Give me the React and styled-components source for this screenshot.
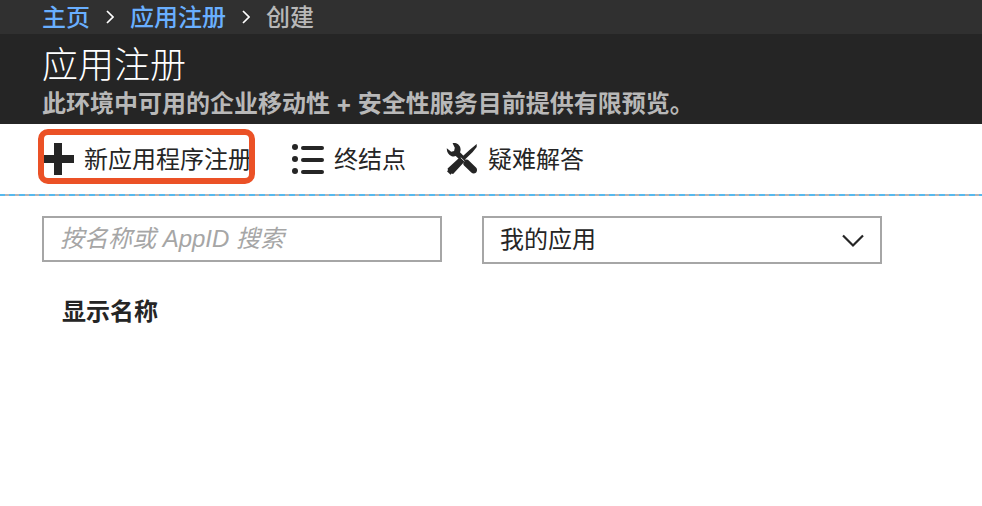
import React from "react";
import styled, { createGlobalStyle } from "styled-components";

const latinFirst = 'Inter, "Noto Sans CJK SC", sans-serif';

const GlobalStyle = createGlobalStyle`
  *, *::before, *::after { box-sizing: border-box; }
  body {
    margin: 0;
    background: #fff;
    color: #252525;
    font-family: "Noto Sans", "Noto Sans CJK SC", sans-serif;
    font-size: 24px;
    line-height: 32px;
  }
`;

const Breadcrumb = styled.nav`
  background: #303030;
  padding: 0 42px;
  height: 34px;
`;

const Crumbs = styled.ol`
  display: flex;
  align-items: center;
  gap: 16px;
  margin: 0;
  padding: 0;
  list-style: none;
  line-height: 34px;
  font-weight: 500;
  color: #b8b8b8;
`;

const Crumb = styled.li`
  display: flex;
  align-items: center;
  gap: 16px;
`;

const CrumbLink = styled.a`
  color: #69afff;
  text-decoration: none;
`;

const Header = styled.header`
  background: #252525;
  padding: 8px 42px 4px;
`;

const Title = styled.h1`
  margin: 0;
  color: #fff;
  font-size: 36px;
  line-height: 46px;
  font-weight: 300;
`;

const Subtitle = styled.p`
  margin: 0;
  color: #b8b8b8;
  font-family: ${latinFirst};
  font-weight: 700;
`;

const Toolbar = styled.div`
  display: flex;
  align-items: center;
  gap: 40px;
  height: 70px;
  padding: 0 42px;
`;

const ToolButton = styled.button`
  position: relative;
  display: flex;
  align-items: center;
  gap: 10px;
  border: 0;
  padding: 0;
  background: none;
  color: inherit;
  font: inherit;
  white-space: nowrap;

  svg { flex: none; }
`;

const Highlight = styled.span`
  position: absolute;
  inset: -14px -3px -9px -4px;
  border: 6px solid #eb5126;
  border-radius: 10px;
  pointer-events: none;
`;

const Divider = styled.hr`
  height: 2px;
  margin: 0;
  border: 0;
  background: repeating-linear-gradient(90deg, #55b9ee 0 5px, #b8b3b3 5px 9px, #55b9ee 9px 10px);
`;

const Filters = styled.form`
  display: flex;
  align-items: flex-start;
  gap: 40px;
  padding: 20px 42px 0;
`;

const SearchInput = styled.input`
  flex: 0 1 400px;
  min-width: 0;
  height: 46px;
  border: 2px solid #a6a6a6;
  border-radius: 0;
  padding: 0 16px;
  background: #fff;
  color: inherit;
  font: inherit;
  font-family: "Liberation Sans", "Noto Sans CJK SC", sans-serif;

  &::placeholder {
    color: #a6a6a6;
    font-style: italic;
    opacity: 1;
  }
`;

const SelectBox = styled.div`
  position: relative;
  flex: 0 1 400px;
  min-width: 0;

  svg {
    position: absolute;
    right: 18px;
    top: 18px;
    pointer-events: none;
  }
`;

const Select = styled.select`
  display: block;
  appearance: none;
  width: 100%;
  height: 48px;
  border: 2px solid #a6a6a6;
  border-radius: 0;
  padding: 0 48px 2px 16px;
  background: #fff;
  color: inherit;
  font: inherit;
`;

const AppTable = styled.table`
  margin: 32px 62px 0;
  border-collapse: collapse;
`;

const HeadCell = styled.th`
  padding: 0;
  text-align: left;
  font-family: ${latinFirst};
  font-weight: 700;
`;

const CrumbArrow = () => (
  <svg width="8" height="14" viewBox="0 0 8 14" fill="none" stroke="#fff" strokeWidth="1.7" aria-hidden="true">
    <path d="M1 1 7 7l-6 6" />
  </svg>
);

const PlusIcon = () => (
  <svg width="32" height="32" viewBox="0 0 32 32" fill="#252525" aria-hidden="true">
    <path d="M12 0h8v12h12v8H20v12h-8V20H0v-8h12z" />
  </svg>
);

const ListIcon = () => (
  <svg width="32" height="32" viewBox="0 0 32 32" fill="#252525" aria-hidden="true">
    {[4, 16, 28].map((y) => (
      <g key={y}>
        <circle cx="3" cy={y} r="3" />
        <rect x="9" y={y - 1} width="23" height="4" rx="2" />
      </g>
    ))}
  </svg>
);

const ToolsIcon = () => (
  <svg width="32" height="32" viewBox="0 0 32 32" fill="#252525" aria-hidden="true">
    <path d="M6.6.2C10.5-1 14.6 2.2 14.6 6.5c0 1.1-.2 1.9-.6 2.8l4.2 4.2-3.4 4.2-5.1-4.6c-1.2.5-2.6.6-4 .1C2.4 12 .6 9 .8 5.3l4.4 3.5 2.9-.8.7-3.2z" />
    <path d="M18.4 17.9c1.3-1.7 3-1.8 4.4-.4l7.2 7c1.3 1.3 1.4 3.5.2 4.9-1.3 1.4-3.4 1.6-4.9.2l-7.3-7.2c-1.2-1.2-.9-2.9.4-4.5z" />
    <path d="M30.7 1.1v2.8l-4 5-7.2 7-.2 1.9L7.1 30.9l-1.7-.4-.7 1.3-1.7-1.5-2-2.1 1-1-.4-1.7L14.7 13.6l2-.3 7.1-6.6z" />
    <path d="m14.8 14.7 3.6 3.5" stroke="#fff" strokeWidth="0.8" />
  </svg>
);

const ChevronDown = () => (
  <svg width="22" height="14" viewBox="0 0 22 14" fill="none" stroke="#252525" strokeWidth="2.2" aria-hidden="true">
    <path d="m1 1.5 10 10 10-10" />
  </svg>
);

export default function App() {
  return (
    <>
      <GlobalStyle />
      <Breadcrumb aria-label="导航">
        <Crumbs>
          <Crumb><CrumbLink href="#home">主页</CrumbLink><CrumbArrow /></Crumb>
          <Crumb><CrumbLink href="#apps">应用注册</CrumbLink><CrumbArrow /></Crumb>
          <Crumb aria-current="page">创建</Crumb>
        </Crumbs>
      </Breadcrumb>
      <Header>
        <Title>应用注册</Title>
        <Subtitle>此环境中可用的企业移动性 + 安全性服务目前提供有限预览。</Subtitle>
      </Header>
      <main>
        <Toolbar role="toolbar">
          <ToolButton type="button"><PlusIcon />新应用程序注册<Highlight /></ToolButton>
          <ToolButton type="button"><ListIcon />终结点</ToolButton>
          <ToolButton type="button"><ToolsIcon />疑难解答</ToolButton>
        </Toolbar>
        <Divider />
        <Filters>
          <SearchInput type="text" aria-label="搜索" placeholder="按名称或 AppID 搜索" />
          <SelectBox>
            <Select aria-label="应用范围" defaultValue="mine">
              <option value="mine">我的应用</option>
            </Select>
            <ChevronDown />
          </SelectBox>
        </Filters>
        <AppTable>
          <thead>
            <tr><HeadCell scope="col">显示名称</HeadCell></tr>
          </thead>
        </AppTable>
      </main>
    </>
  );
}
